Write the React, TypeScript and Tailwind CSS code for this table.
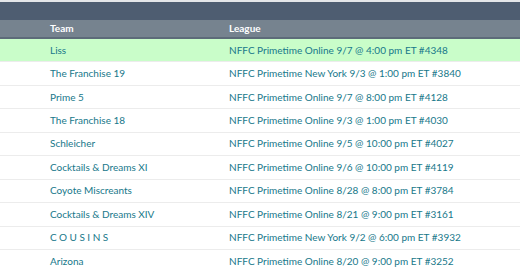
import React from "react";

const rows: [string, string, boolean?][] = [
  ["Liss", "NFFC Primetime Online 9/7 @ 4:00 pm ET #4348", true],
  ["The Franchise 19", "NFFC Primetime New York 9/3 @ 1:00 pm ET #3840"],
  ["Prime 5", "NFFC Primetime Online 9/7 @ 8:00 pm ET #4128"],
  ["The Franchise 18", "NFFC Primetime Online 9/3 @ 1:00 pm ET #4030"],
  ["Schleicher", "NFFC Primetime Online 9/5 @ 10:00 pm ET #4027"],
  ["Cocktails & Dreams XI", "NFFC Primetime Online 9/6 @ 10:00 pm ET #4119"],
  ["Coyote Miscreants", "NFFC Primetime Online 8/28 @ 8:00 pm ET #3784"],
  ["Cocktails & Dreams XIV", "NFFC Primetime Online 8/21 @ 9:00 pm ET #3161"],
  ["COUSINS", "NFFC Primetime New York 9/2 @ 6:00 pm ET #3932"],
  ["Arizona", "NFFC Primetime Online 8/20 @ 9:00 pm ET #3252"],
];

export default function App() {
  return (
    <div
      className="w-[520px] h-[272px] overflow-hidden bg-white"
      style={{ fontFamily: "Lato, 'Open Sans', sans-serif" }}
    >
      <div className="h-[2px] bg-[#e4e6e9]" />
      <div className="h-[18px] bg-[#4e5d71]" />
      <div className="h-[17px] bg-[#76838f] flex items-center text-white font-bold text-[10px]">
        <div className="w-[229px] pl-[50px]">Team</div>
        <div>League</div>
      </div>
      <div className="h-[2px] bg-[#5d6b79]" />
      {rows.map(([team, league, hl], i) => (
        <div
          key={i}
          className={`h-[23.45px] flex items-center text-[10px] text-[#17788a] border-b border-[#ececec] ${
            hl ? "bg-[#c9fdc9]" : "bg-white"
          }`}
        >
          <div
            className={`w-[229px] pl-[50px] ${
              team === "COUSINS" ? "tracking-[2.5px]" : ""
            }`}
          >
            {team}
          </div>
          <div>{league}</div>
        </div>
      ))}
    </div>
  );
}
